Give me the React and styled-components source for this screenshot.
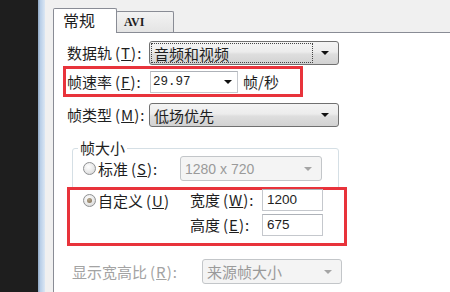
import React from 'react';
import styled, { createGlobalStyle } from "styled-components";

const GlobalStyle = createGlobalStyle`
  html, body {
    margin: 0;
    padding: 0;
    width: 450px;
    height: 292px;
    overflow: hidden;
    background: #1e1e1e;
  }
  body {
    font-family: "Noto Sans CJK SC", "Noto Sans", sans-serif;
    color: #1e1e1e;
  }
`;

const Page = styled.div`
  display: flex;
  height: 292px;
`;

const Backdrop = styled.div`
  width: 38px;
  flex-shrink: 0;
  background: #1e1e1e;
`;

const FrameEdge = styled.div`
  width: 7px;
  flex-shrink: 0;
  background: linear-gradient(to right, #8ea6c2 0, #b9cfe8 35%, #dbe7f4 100%);
`;

const Window = styled.div`
  flex: 1;
  min-width: 0;
  display: flex;
  flex-direction: column;
  background: #f0f0f0;
  padding: 8px 0 0 8px;
`;

const Tabs = styled.div`
  display: flex;
  align-items: flex-end;
  height: 24px;
`;

const Tab = styled.div`
  position: relative;
  box-sizing: border-box;
  width: ${p => p.$w}px;
  height: ${p => (p.$active ? 25 : 21)}px;
  margin-bottom: ${p => (p.$active ? -1 : 0)}px;
  margin-left: ${p => (p.$active ? 0 : -1)}px;
  z-index: ${p => (p.$active ? 1 : 0)};
  border: 1px solid #898c95;
  border-bottom: none;
  border-radius: 2px 2px 0 0;
  background: ${p => (p.$active ? '#fff' : 'linear-gradient(#f3f3f3, #e4e4e4)')};
  padding-left: ${p => (p.$active ? 9 : 7)}px;
  font-size: ${p => (p.$active ? 16 : 12)}px;
  line-height: ${p => (p.$active ? 22 : 20)}px;
  font-family: ${p => (p.$active ? '"Noto Sans CJK SC", sans-serif' : '"Liberation Serif", serif')};
  font-weight: ${p => (p.$active ? 400 : 700)};
`;

const Panel = styled.div`
  flex: 1;
  display: flex;
  flex-direction: column;
  align-items: flex-start;
  background: #fff;
  border-top: 1px solid #898c95;
  border-left: 1px solid #898c95;
  padding: 8px 0 0 13px;
`;

const Row = styled.div`
  display: flex;
  align-items: center;
  height: ${p => p.$h || 24}px;
  margin-top: ${p => p.$mt || 0}px;
  padding-left: ${p => p.$pl || 0}px;
`;

const Label = styled.span`
  width: ${p => p.$w}px;
  flex-shrink: 0;
  font-size: 15px;
  line-height: 20px;
  white-space: nowrap;
  color: ${p => (p.$muted ? '#a3a3a3' : '#1e1e1e')};
`;

const Key = styled.span`
  margin-left: 3px;
  letter-spacing: 1px;
  & u {
    text-underline-offset: 1px;
  }
`;

const Select = styled.div`
  box-sizing: border-box;
  display: flex;
  align-items: center;
  width: ${p => p.$w}px;
  height: ${p => p.$h || 24}px;
  border: 1px solid ${p => (p.$disabled ? '#c3c6c9' : '#707070')};
  border-radius: 3px;
  background: ${p => (p.$disabled
    ? '#f4f4f4'
    : 'linear-gradient(#f4f4f4 0%, #ececec 45%, #dedede 55%, #d2d2d2 100%)')};
  color: ${p => (p.$disabled ? '#9a9a9a' : '#1e1e1e')};
  padding-left: 2px;
`;

const Value = styled.span`
  flex: 1;
  box-sizing: border-box;
  height: 18px;
  display: flex;
  align-items: center;
  padding-left: 2px;
  font-size: ${p => (p.$latin ? 14 : 15)}px;
  font-family: ${p => (p.$latin ? '"Liberation Sans", sans-serif' : 'inherit')};
  outline: ${p => (p.$focus ? '1px dotted #444' : 'none')};
  white-space: nowrap;
`;

const Arrow = styled.span`
  width: 0;
  height: 0;
  border-left: 4px solid transparent;
  border-right: 4px solid transparent;
  border-top: 4px solid ${p => (p.$muted ? '#a5a5a5' : '#111')};
  margin: 0 ${p => p.$mr || 9}px 0 ${p => p.$ml || 9}px;
`;

const Highlight = styled.div`
  box-sizing: border-box;
  border: 3px solid #e8333b;
  background: #fff;
  width: ${p => p.$w}px;
  height: ${p => p.$h}px;
`;

const RateBox = styled(Highlight)`
  display: flex;
  align-items: center;
  margin: 1px 0 0 -4px;
  padding-left: 1px;
`;

const Combo = styled.div`
  box-sizing: border-box;
  display: flex;
  align-items: center;
  width: 88px;
  height: 22px;
  border: 1px solid #c5c8cd;
  border-top-color: #aeb2b8;
  background: #fff;
  padding-left: 2px;
  font-family: "Liberation Mono", monospace;
  font-size: 12.5px;
`;

const ComboText = styled.span`
  flex: 1;
`;

const Unit = styled.span`
  margin-left: 5px;
  font-size: 15px;
`;

const Group = styled.fieldset`
  box-sizing: border-box;
  width: 267px;
  min-width: 0;
  margin: 13px 0 0 5px;
  padding: 0 0 0 9px;
  border: 1px solid #d5dfe5;
  border-radius: 3px;
`;

const Legend = styled.legend`
  font-size: 15px;
  line-height: 16px;
  padding: 0 2px;
  margin-left: -4px;
`;

const Radio = styled.span`
  box-sizing: border-box;
  display: inline-flex;
  align-items: center;
  justify-content: center;
  width: 13px;
  height: 13px;
  margin-left: 1px;
  margin-right: 2px;
  flex-shrink: 0;
  border-radius: 50%;
  border: 1px solid #8e9092;
  background: radial-gradient(circle at 40% 35%, #ffffff 0%, #e8e8e8 55%, #cdcdcd 100%);

  &::after {
    content: "";
    width: 5px;
    height: 5px;
    border-radius: 50%;
    background: ${p => (p.$checked ? 'radial-gradient(circle at 40% 35%, #b8a98f, #7d6c52)' : 'transparent')};
  }
`;

const CustomBox = styled(Highlight)`
  margin: 6px 0 -3px -15px;
  padding-left: 12px;
`;

const SizeGrid = styled.div`
  display: grid;
  grid-template-columns: 108px 72px 61px;
  grid-template-rows: 22px 22px;
  row-gap: 3px;
  align-items: center;
  margin-top: -1px;
`;

const Choice = styled.div`
  display: flex;
  align-items: center;
  font-size: 15px;
  white-space: nowrap;
`;

const TextBox = styled.div`
  box-sizing: border-box;
  height: 22px;
  border: 1px solid #c5c8cd;
  border-top-color: #aeb2b8;
  background: #fff;
  padding-left: 4px;
  font-family: "Liberation Sans", sans-serif;
  font-size: 13.5px;
  line-height: 19px;
`;

const App = () => {
  return (
    <>
      <GlobalStyle />
      <Page>
        <Backdrop />
        <FrameEdge />
        <Window>
          <Tabs>
            <Tab $active $w={64}>常规</Tab>
            <Tab $w={58}>AVI</Tab>
          </Tabs>
          <Panel>
            <Row>
              <Label $w={82}>数据轨<Key>(<u>T</u>):</Key></Label>
              <Select $w={190}>
                <Value $focus>音频和视频</Value>
                <Arrow />
              </Select>
            </Row>

            <RateBox $w={240} $h={31}>
              <Label $w={83}>帧速率<Key>(<u>F</u>):</Key></Label>
              <Combo>
                <ComboText>29.97</ComboText>
                <Arrow $mr={5} />
              </Combo>
              <Unit>帧/秒</Unit>
            </RateBox>

            <Row $mt={6}>
              <Label $w={82}>帧类型<Key>(<u>M</u>):</Key></Label>
              <Select $w={190}>
                <Value>低场优先</Value>
                <Arrow />
              </Select>
            </Row>

            <Group>
              <Legend>帧大小</Legend>
              <Row $h={25}>
                <Radio />
                <Label $w={82}>标准<Key>(<u>S</u>):</Key></Label>
                <Select $w={142} $h={25} $disabled>
                  <Value $latin>1280 x 720</Value>
                  <Arrow $muted />
                </Select>
              </Row>
              <CustomBox $w={280} $h={59}>
                <SizeGrid>
                  <Choice>
                    <Radio $checked />
                    自定义<Key>(<u>U</u>)</Key>
                  </Choice>
                  <Label $w={72}>宽度<Key>(<u>W</u>):</Key></Label>
                  <TextBox>1200</TextBox>
                  <span />
                  <Label $w={72}>高度<Key>(<u>E</u>):</Key></Label>
                  <TextBox>675</TextBox>
                </SizeGrid>
              </CustomBox>
            </Group>

            <Row $h={25} $mt={15} $pl={5}>
              <Label $w={130} $muted>显示宽高比<Key>(<u>R</u>):</Key></Label>
              <Select $w={140} $h={25} $disabled>
                <Value>来源帧大小</Value>
                <Arrow $muted />
              </Select>
            </Row>
          </Panel>
        </Window>
      </Page>
    </>
  );
};

export default App;
